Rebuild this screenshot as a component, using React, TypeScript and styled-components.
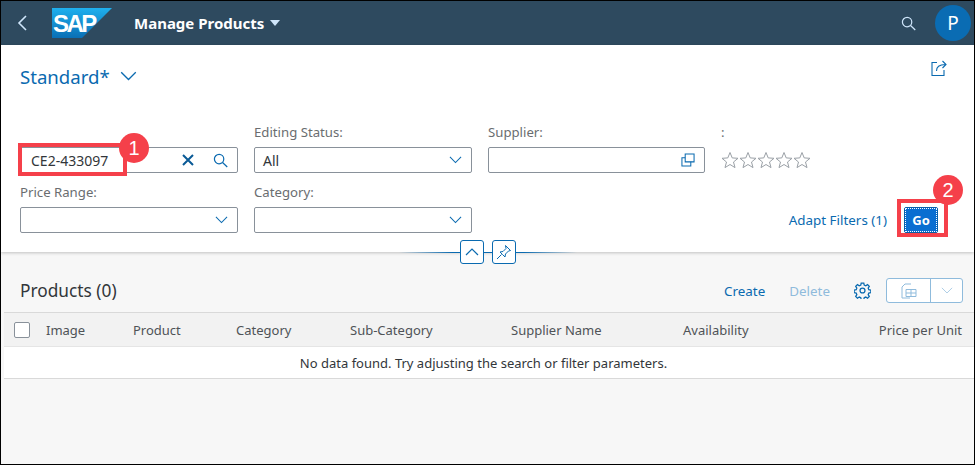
import React from "react";
import styled, { createGlobalStyle } from "styled-components";

const Global = createGlobalStyle`
  html, body { margin: 0; padding: 0; background: #f7f7f7; }
  body { font-family: "Noto Sans", "Open Sans", sans-serif; color: #32363a; }
`;

const Page = styled.div`
  position: relative;
  width: 975px;
  height: 465px;
  box-sizing: border-box;
  border: 1px solid #000;
  overflow: hidden;
  display: flex;
  flex-direction: column;
  background: #f7f7f7;
`;

const ShellBar = styled.header`
  height: 44px;
  flex: none;
  background: #2e4a5f;
  display: flex;
  align-items: center;
  padding: 0 25px 0 16px;
`;
const IconSlot = styled.span`
  display: inline-flex;
  align-items: center;
  justify-content: center;
  flex: none;
`;
const LogoSlot = styled(IconSlot)`
  margin-left: 24px;
`;
const AppTitle = styled.div`
  margin-left: 22px;
  font-size: 15px;
  font-weight: 700;
  color: #fff;
  display: flex;
  align-items: center;
  gap: 6px;
  flex: 1;
`;
const Avatar = styled.div`
  width: 36px;
  height: 36px;
  margin-left: 19px;
  margin-right: -22px;
  border-radius: 50%;
  background: #0a6cb3;
  color: #fff;
  font-size: 19px;
  display: flex;
  align-items: center;
  justify-content: center;
`;

const FilterBar = styled.section`
  flex: none;
  height: 207px;
  box-sizing: border-box;
  background: #fff;
  box-shadow: 0 1px 3px rgba(0, 0, 0, 0.22);
  padding: 0 19px;
  position: relative;
  z-index: 1;
`;
const VariantRow = styled.div`
  height: 62px;
  display: flex;
  align-items: center;
  justify-content: space-between;
`;
const Variant = styled.div`
  font-size: 18.6px;
  color: #0a6ab0;
  display: flex;
  align-items: center;
  gap: 10px;
`;
const ShareSlot = styled(IconSlot)`
  margin: -16px 8px 0 0;
`;
const FilterGrid = styled.div`
  margin-top: 17px;
  display: grid;
  grid-template-columns: 218px 218px 217px 1fr;
  column-gap: 16px;
  row-gap: 11px;
`;
const Field = styled.div`
  display: flex;
  flex-direction: column;
`;
const Label = styled.div`
  height: 23px;
  line-height: 16px;
  font-size: 13.2px;
  color: #6a6d70;
`;
const Input = styled.div<{ $pad?: number }>`
  height: 26px;
  box-sizing: border-box;
  border: 1px solid #89919a;
  border-radius: 2px;
  background: #fff;
  font-size: 14px;
  display: flex;
  align-items: center;
  padding: 0 9px 0 ${(p) => p.$pad ?? 8}px;
  justify-content: space-between;
`;
const Trailing = styled.span`
  display: inline-flex;
  align-items: center;
  gap: 19px;
`;
const Stars = styled.div`
  display: flex;
  height: 26px;
  align-items: center;
`;
const FilterActions = styled.div`
  display: flex;
  align-items: flex-end;
  justify-content: flex-end;
  gap: 17px;
  padding-right: 17px;
`;
const LinkText = styled.span<{ $disabled?: boolean }>`
  font-size: 13.4px;
  line-height: 26px;
  color: ${(p) => (p.$disabled ? "#8fbbdc" : "#0a6ab0")};
`;
const DeleteLink = styled(LinkText)`
  margin-left: 24px;
`;
const GoButton = styled.button`
  width: 34px;
  height: 26px;
  padding: 0;
  box-sizing: border-box;
  border: 1px solid #0a5ea8;
  border-radius: 2px;
  background: #0a6ed1;
  color: #fff;
  font: 700 13px "Noto Sans", sans-serif;
  outline: 1px dotted #fff;
  outline-offset: -2px;
`;
const CollapseBar = styled.div`
  position: absolute;
  left: 398px;
  top: 196px;
  width: 178px;
  height: 22px;
  display: flex;
  align-items: center;
  justify-content: center;
  gap: 8px;
  background: linear-gradient(90deg, rgba(10,106,176,0), #0a6ab0 30%, #0a6ab0 70%, rgba(10,106,176,0)) center / 100% 1px no-repeat;
`;
const CollapseButton = styled.button`
  flex: none;
  width: 24px;
  height: 24px;
  padding: 0;
  box-sizing: border-box;
  border: 1px solid #0a6ab0;
  border-radius: 3px;
  background: #fff;
  display: flex;
  align-items: center;
  justify-content: center;
`;

const Content = styled.main`
  flex: 1;
  padding: 0 0 0 3px;
`;
const TableToolbar = styled.div`
  height: 60px;
  box-sizing: border-box;
  padding: 17px 11px 0 16px;
  display: flex;
  align-items: center;
`;
const TableTitle = styled.h2`
  margin: 0;
  font-size: 17.3px;
  font-weight: 400;
  flex: 1;
  color: #32363a;
`;
const ToolActions = styled.div`
  display: flex;
  align-items: center;
`;
const GearSlot = styled(IconSlot)`
  margin: 0 15px 0 24px;
`;
const SplitButton = styled.div`
  display: flex;
  width: 77px;
  height: 25px;
  box-sizing: border-box;
  border: 1px solid #8fbbdc;
  border-radius: 3px;
  background: #fff;
`;
const SplitMain = styled.span`
  flex: 1;
  display: flex;
  align-items: center;
  justify-content: center;
  border-right: 1px solid #8fbbdc;
`;
const SplitArrow = styled.span`
  width: 31px;
  display: flex;
  align-items: center;
  justify-content: center;
`;
const HeaderRow = styled.div`
  height: 35px;
  box-sizing: border-box;
  background: #f2f2f2;
  border-top: 1px solid #d9d9d9;
  border-bottom: 1px solid #e5e5e5;
  display: flex;
  align-items: center;
  font-size: 13px;
  color: #4f5357;
  position: relative;
`;
const Column = styled.span<{ $w: number }>`
  flex: none;
  width: ${(p) => p.$w}px;
`;
const Check = styled.span`
  flex: none;
  width: 14px;
  height: 14px;
  border: 1px solid #89919a;
  border-radius: 2px;
  background: #fff;
  margin: 0 16px 0 10px;
`;
const PriceColumn = styled.span`
  flex: 1;
  text-align: right;
  padding-right: 12px;
`;
const EmptyRow = styled.div`
  height: 32px;
  box-sizing: border-box;
  background: #fff;
  border-bottom: 1px solid #d9d9d9;
  display: flex;
  align-items: center;
  justify-content: center;
  padding-right: 11px;
  font-size: 13px;
  color: #32363a;
`;

const Highlight = styled.div<{ $l: number; $t: number; $w: number; $h: number }>`
  position: absolute;
  left: ${(p) => p.$l}px;
  top: ${(p) => p.$t}px;
  width: ${(p) => p.$w}px;
  height: ${(p) => p.$h}px;
  box-sizing: border-box;
  border: 4px solid #f5404a;
  z-index: 3;
`;
const Badge = styled.div<{ $l: number; $t: number }>`
  position: absolute;
  left: ${(p) => p.$l}px;
  top: ${(p) => p.$t}px;
  width: 30px;
  height: 30px;
  border-radius: 50%;
  background: #f5404a;
  color: #fff;
  font: 400 20px "Liberation Sans", sans-serif;
  display: flex;
  align-items: center;
  justify-content: center;
  z-index: 4;
`;

const Star = () => (
  <svg width="18" height="18" viewBox="0 0 18 18" fill="none" stroke="#9aa0a6" strokeWidth="1">
    <path d="M9 1.500l2.200 5.400 5.800.4-4.500 3.700 1.500 5.600L9 13.500l-5 3.100 1.500-5.600L1 7.300l5.800-.4z" />
  </svg>
);
const Chevron = ({ color = "#0a6ab0", w = 13 }: { color?: string; w?: number }) => (
  <svg width={w} height={w * 0.6} viewBox="0 0 14 8.4" fill="none" stroke={color} strokeWidth="1.1">
    <path d="M1 1l6 6 6-6" />
  </svg>
);
const SearchIcon = ({ color = "#0a6ab0" }: { color?: string }) => (
  <svg width="15" height="15" viewBox="0 0 16 16" fill="none" stroke={color} strokeWidth="1.3">
    <circle cx="6.500" cy="6.500" r="5" />
    <path d="M10.200 10.200l5 4.800" />
  </svg>
);

const columns: [string, number][] = [
  ["Image", 87],
  ["Product", 103],
  ["Category", 114],
  ["Sub-Category", 161],
  ["Supplier Name", 172],
  ["Availability", 150],
];

export default function App() {
  return (
    <Page>
      <Global />
      <ShellBar>
        <IconSlot>
          <svg width="11" height="16" viewBox="0 0 11 16" fill="none" stroke="#cfe6fb" strokeWidth="1.6">
            <path d="M9 1L2 8l7 7" />
          </svg>
        </IconSlot>
        <LogoSlot>
          <svg width="60" height="30" viewBox="0 0 60 30">
            <defs>
              <linearGradient id="sap" x1="0" y1="0" x2="0" y2="1">
                <stop offset="0" stopColor="#1fb0ee" />
                <stop offset="1" stopColor="#0a6fb5" />
              </linearGradient>
            </defs>
            <path d="M0 0h60L30 30H0z" fill="url(#sap)" />
            <text x="1" y="24" fontFamily="Liberation Sans" fontWeight="700" fontSize="24" letterSpacing="-2.500" fill="#fff">SAP</text>
          </svg>
        </LogoSlot>
        <AppTitle>
          Manage Products
          <svg width="10" height="6" viewBox="0 0 10 6" fill="#cfe6fb">
            <path d="M0 0h10L5 6z" />
          </svg>
        </AppTitle>
        <IconSlot>
          <SearchIcon color="#cfe6fb" />
        </IconSlot>
        <Avatar>P</Avatar>
      </ShellBar>

      <FilterBar>
        <VariantRow>
          <Variant>
            Standard*
            <Chevron w={17} />
          </Variant>
          <ShareSlot>
            <svg width="16" height="16" viewBox="0 0 16 16" fill="none" stroke="#0a6ab0" strokeWidth="1.1">
              <path d="M6 2.500H1v13h12V10" />
              <path d="M5.500 11c0-4 2.500-6.500 9-6.500M11.500 1l3.500 3.500L11.500 8" />
            </svg>
          </ShareSlot>
        </VariantRow>
        <FilterGrid>
          <Field>
            <Label>&nbsp;</Label>
            <Input $pad={10}>
              CE2-433097
              <Trailing>
                <svg width="12" height="12" viewBox="0 0 12 12" stroke="#0a5a96" strokeWidth="2">
                  <path d="M1 1l10 10M11 1L1 11" />
                </svg>
                <SearchIcon />
              </Trailing>
            </Input>
          </Field>
          <Field>
            <Label>Editing Status:</Label>
            <Input>
              All
              <Chevron />
            </Input>
          </Field>
          <Field>
            <Label>Supplier:</Label>
            <Input>
              <span />
              <svg width="14" height="14" viewBox="0 0 15 15" fill="none" stroke="#0a6ab0" strokeWidth="1.100">
                <path d="M4.500 1h9.500v8.500H4.500z" />
                <path d="M4.500 5H1v9h9.500v-4.500" />
              </svg>
            </Input>
          </Field>
          <Field>
            <Label>:</Label>
            <Stars>
              <Star />
              <Star />
              <Star />
              <Star />
              <Star />
            </Stars>
          </Field>
          <Field>
            <Label>Price Range:</Label>
            <Input>
              <span />
              <Chevron />
            </Input>
          </Field>
          <Field>
            <Label>Category:</Label>
            <Input>
              <span />
              <Chevron />
            </Input>
          </Field>
          <span />
          <FilterActions>
            <LinkText>Adapt Filters (1)</LinkText>
            <GoButton>Go</GoButton>
          </FilterActions>
        </FilterGrid>
        <CollapseBar>
          <CollapseButton>
            <svg width="14" height="8" viewBox="0 0 14 8" fill="none" stroke="#0a6ab0" strokeWidth="1.200">
              <path d="M1 7l6-6 6 6" />
            </svg>
          </CollapseButton>
          <CollapseButton>
            <svg width="16" height="16" viewBox="0 0 16 16" fill="none" stroke="#0a6ab0" strokeWidth="1">
              <path d="M9.500 1.500l5 5-2 .5-3 3-.5 3-2.500-2.500-2.500-2.500 3-.5 3-3z" />
              <path d="M5.500 10.500L1 15" />
            </svg>
          </CollapseButton>
        </CollapseBar>
      </FilterBar>

      <Content>
        <TableToolbar>
          <TableTitle>Products (0)</TableTitle>
          <ToolActions>
            <LinkText>Create</LinkText>
            <DeleteLink $disabled>Delete</DeleteLink>
            <GearSlot>
              <svg width="17" height="17" viewBox="0 0 24 24" fill="none" stroke="#0a6ab0" strokeWidth="1.800">
                <circle cx="12" cy="12" r="3.500" />
                <path d="M10.200 1.500h3.600l.6 2.900 2.200.9 2.500-1.600 2.500 2.500-1.600 2.500.9 2.200 2.900.6v3.600l-2.900.6-.9 2.200 1.600 2.500-2.500 2.500-2.500-1.600-2.200.9-.6 2.900h-3.600l-.6-2.900-2.200-.9-2.500 1.600-2.500-2.500 1.600-2.500-.9-2.200-2.900-.6v-3.600l2.900-.6.9-2.200-1.600-2.500 2.500-2.500 2.500 1.600 2.200-.9z" />
              </svg>
            </GearSlot>
            <SplitButton>
              <SplitMain>
                <svg width="17" height="16" viewBox="0 0 17 16" fill="none" stroke="#8fbbdc" strokeWidth="1">
                  <path d="M11 1H5L2 4v11h8" />
                  <path d="M6 6.500h10v7H6zM6 10h10M11 6.500v7" />
                </svg>
              </SplitMain>
              <SplitArrow>
                <Chevron color="#a9cbe4" w={12} />
              </SplitArrow>
            </SplitButton>
          </ToolActions>
        </TableToolbar>
        <HeaderRow>
          <Check />
          {columns.map(([name, w]) => (
            <Column key={name} $w={w}>
              {name}
            </Column>
          ))}
          <PriceColumn>Price per Unit</PriceColumn>
        </HeaderRow>
        <EmptyRow>No data found. Try adjusting the search or filter parameters.</EmptyRow>
      </Content>

      <Highlight $l={17} $t={142} $w={109} $h={33} />
      <Badge $l={118} $t={132}>1</Badge>
      <Highlight $l={896} $t={198} $w={51} $h={38} />
      <Badge $l={932} $t={174}>2</Badge>
    </Page>
  );
}
